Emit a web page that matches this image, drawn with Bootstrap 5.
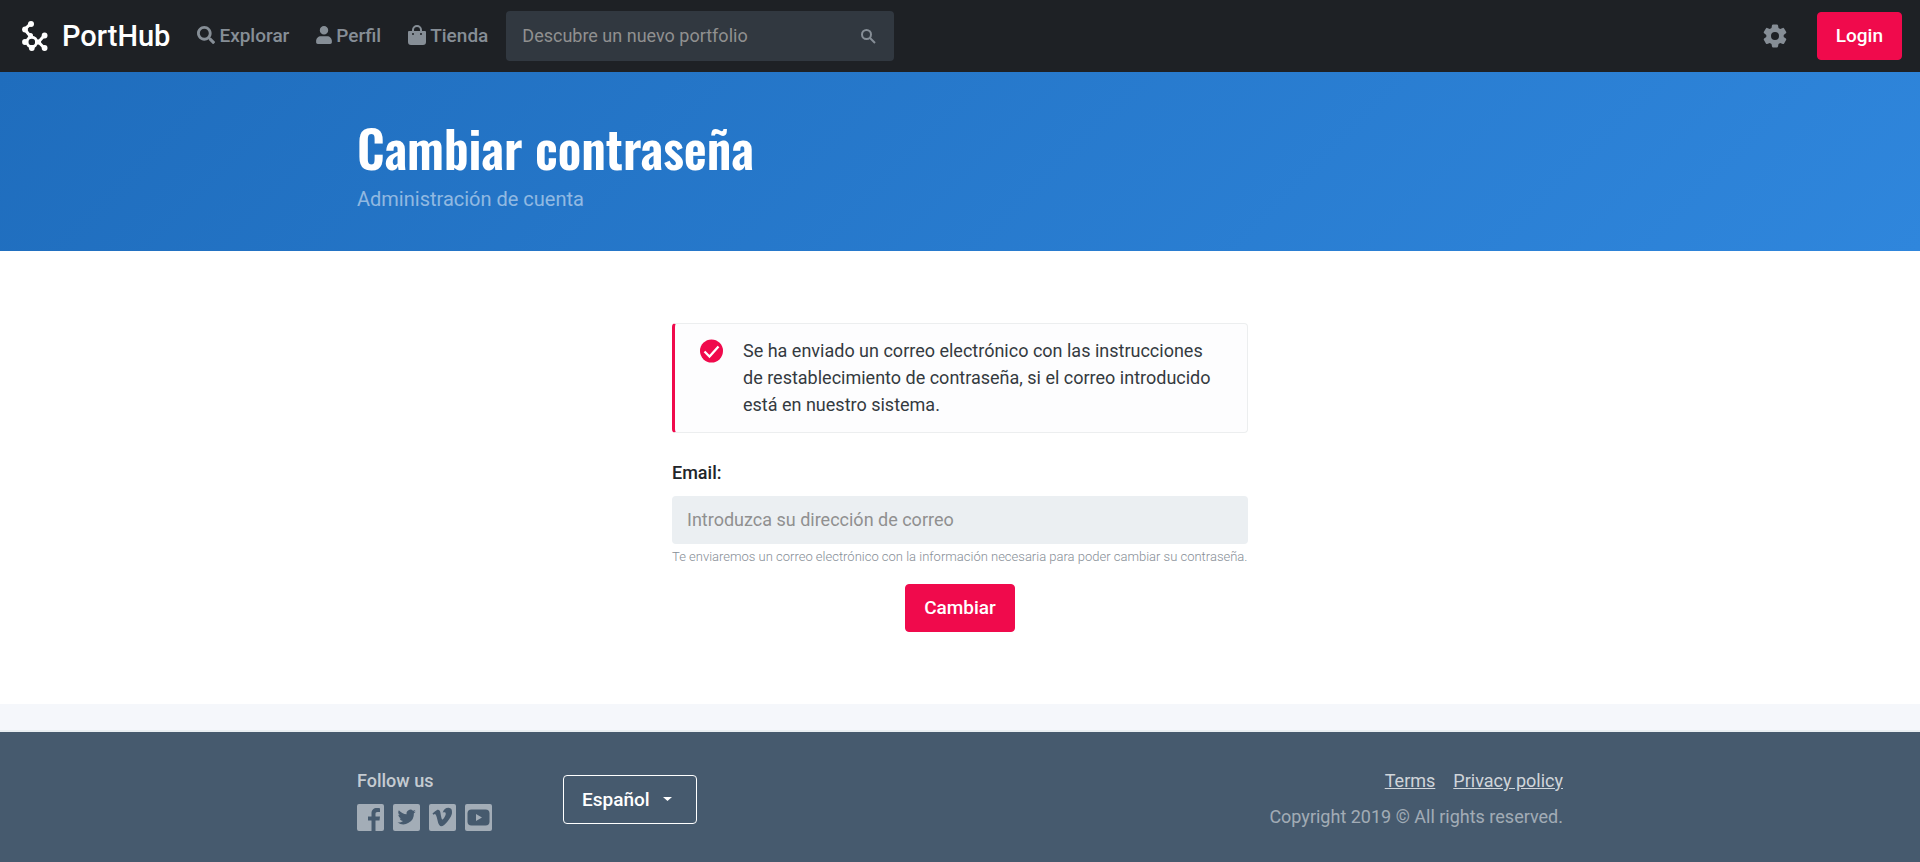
<!DOCTYPE html>
<html lang="es">
<head>
<meta charset="utf-8">
<meta name="viewport" content="width=device-width, initial-scale=1">
<title>PortHub - Cambiar contraseña</title>
<link href="https://cdn.jsdelivr.net/npm/bootstrap@5.3.0/dist/css/bootstrap.min.css" rel="stylesheet">
<style>
body{font-family:Roboto,"Liberation Sans",sans-serif;font-size:18px;line-height:27px;color:#212529;background:#fff}
.topbar{background:#1e2125;min-height:72px;padding:0 18px 0 22px}
.topbar .navbar-brand{font-size:29px;font-weight:500;line-height:36px;color:#fff;gap:14px;padding:0;margin-right:27px}
.topbar .navbar-nav .nav-link{color:#868e96;font-size:19px;font-weight:500;padding:0 0 2px;gap:4px}
.topbar .navbar-nav{gap:27px}
.site-search{width:388px;margin-left:18px;background:#313840;border-radius:4px;height:50px;padding:0 18px 0 16px}
.site-search input{background:transparent;border:0;outline:0;color:#fff;min-width:0;padding:0 0 2px}
.site-search input::placeholder,.field::placeholder{color:#909090;opacity:1}
.icon-btn{background:none;border:0;padding:0;color:#868e96;line-height:0}
.btn-brand{background:#f00a4c;color:#fff;font-size:19px;line-height:26px;font-weight:500;border:1px solid #f00a4c;border-radius:4px;padding:10px 18px}
.btn-brand:hover{background:#d10842;color:#fff}
.page{max-width:1242px;padding:0 18px}
.hero{background:linear-gradient(135deg,#1f6dbd 0%,#2f86dc 100%);padding:45px 0 38px}
.hero h1{font-family:Oswald,"Liberation Sans Narrow","DejaVu Sans Condensed",sans-serif;font-size:50px;line-height:60px;font-weight:600;color:#fff;margin:0 0 9px}
.hero p{font-size:20px;line-height:27px;color:rgba(255,255,255,.5);margin:0}
.form-col{max-width:612px;padding:72px 18px}
.notice{background:#fdfdfe;border:1px solid #eceeef;border-left:3px solid #f00a4c;border-radius:4px;padding:13px 26px 14px 25px;gap:19px;color:#343a40;margin-bottom:26px}
.notice svg{margin-top:2px}
.field-label{font-weight:500;margin-bottom:10px}
.field{background:#ebeff2;border:0;border-radius:4px;height:48px;padding:0 15px 2px}
.hint{font-size:13px;line-height:20px;font-weight:300;color:#868e96;padding-top:3px;margin-bottom:17px}
.divider{height:28px;background:#f5f7fb;border-bottom:2px solid #e9eef2}
.site-footer{background:#465a6e;padding:35px 0 31px;color:rgba(255,255,255,.5)}
.site-footer h2{font-size:18px;line-height:27px;font-weight:500;color:rgba(255,255,255,.7);margin:0 0 10px}
.site-footer .social{gap:9px;color:#a3adb7;line-height:0}
.social a{color:inherit}
.site-footer .legal a{color:rgba(255,255,255,.75)}
.legal{gap:18px;margin-bottom:9px}
.lang{appearance:none;background:transparent url("data:image/svg+xml,%3Csvg xmlns='http://www.w3.org/2000/svg' width='10' height='5'%3E%3Cpath d='M0 0h9L4.500 4z' fill='white'/%3E%3C/svg%3E") no-repeat right 23px center;border:1px solid #fff;border-radius:4px;color:#fff;font-size:19px;font-weight:500;height:49px;width:134px;padding:0 18px;margin-top:8px}
.lang option{color:#212529}
.follow{margin-right:71px}
</style>
</head>
<body class="d-flex flex-column min-vh-100">
<nav class="navbar navbar-expand topbar">
  <a class="navbar-brand d-flex align-items-center" href="#">
    <svg width="26" height="30" viewBox="0 0 26 30" fill="#fff"><g fill="none" stroke="#fff" stroke-width="3"><path d="M8.700 2.700 2.700 8.300 8.500 15.500"/><circle cx="9.800" cy="21" r="4.800"/><path d="M13 21h4M16.500 21l6-6.700M16.500 21l6 6.300"/></g><circle cx="9" cy="3" r="3"/><circle cx="3" cy="8.500" r="2.900"/><circle cx="8.500" cy="14.500" r="2.500"/><circle cx="3" cy="21" r="2.900"/><circle cx="9.800" cy="27" r="2.900"/><circle cx="16.500" cy="21" r="2.600"/><circle cx="22.600" cy="14.500" r="2.900"/><circle cx="22.600" cy="27" r="2.900"/></svg>
    <span>PortHub</span>
  </a>
  <ul class="navbar-nav">
    <li><a class="nav-link d-flex align-items-center" href="#"><svg width="18" height="18" viewBox="0 0 512 512" fill="currentColor"><path d="M505 442.700 405.300 343c-4.500-4.500-10.600-7-17-7H372c27.600-35.300 44-79.700 44-128C416 93.100 322.900 0 208 0S0 93.100 0 208s93.100 208 208 208c48.300 0 92.700-16.400 128-44v16.300c0 6.400 2.500 12.500 7 17l99.700 99.700c9.400 9.400 24.600 9.400 33.900 0l28.300-28.300c9.400-9.400 9.400-24.600.1-34zM208 336c-70.700 0-128-57.200-128-128 0-70.700 57.200-128 128-128 70.700 0 128 57.200 128 128 0 70.700-57.200 128-128 128z"/></svg>Explorar</a></li>
    <li><a class="nav-link d-flex align-items-center" href="#"><svg width="16" height="18" viewBox="0 0 448 512" fill="currentColor"><path d="M224 240c66 0 120-54 120-120S290 0 224 0 104 54 104 120s54 120 120 120zm89.600 48H134.400C60.200 288 0 348.200 0 422.400V464c0 26.500 21.500 48 48 48h352c26.500 0 48-21.500 48-48v-41.600c0-74.200-60.200-134.400-134.400-134.400z"/></svg>Perfil</a></li>
    <li><a class="nav-link d-flex align-items-center" href="#"><svg width="18" height="20" viewBox="0 0 18 20" fill="currentColor"><path fill-rule="evenodd" d="M4 6V5a5 5 0 0 1 10 0v1h3a1 1 0 0 1 1 1v10a3 3 0 0 1-3 3H3a3 3 0 0 1-3-3V7a1 1 0 0 1 1-1zm2 0h6V5a3 3 0 0 0-6 0zM5 8a1 1 0 1 0 0 2 1 1 0 0 0 0-2m8 0a1 1 0 1 0 0 2 1 1 0 0 0 0-2"/></svg>Tienda</a></li>
  </ul>
  <form class="site-search d-flex align-items-center">
    <input class="flex-grow-1" type="text" placeholder="Descubre un nuevo portfolio" aria-label="Descubre un nuevo portfolio">
    <button class="icon-btn" type="button" aria-label="Buscar"><svg width="15" height="15" viewBox="0 0 15 15" fill="none" stroke="currentColor" stroke-width="2"><circle cx="5.500" cy="5.500" r="4.500"/><path d="m9 9 5 5"/></svg></button>
  </form>
  <div class="ms-auto d-flex align-items-center">
    <button class="icon-btn me-4" type="button" aria-label="Ajustes"><svg width="36" height="28" viewBox="-6 -2 36 28" fill="currentColor"><path d="M13.900 23.500c.5 0 1-.4 1.100-.9l.5-2.700c.6-.3 1.200-.6 1.700-1l2.600 1c.5.200 1 0 1.300-.5l2-3.400c.3-.5.200-1-.2-1.400l-2.200-1.700v-2l2.200-1.700c.4-.3.500-.9.200-1.400l-2-3.400c-.3-.5-.8-.7-1.300-.5l-2.600 1c-.5-.4-1.100-.7-1.700-1L15 1.300c-.1-.5-.5-.9-1.100-.9h-3.800C9.500.4 9.100.8 9 1.300l-.5 2.600c-.6.300-1.200.6-1.700 1l-2.600-1c-.5-.2-1 0-1.300.5l-2 3.400c-.3.500-.2 1.100.2 1.400l2.200 1.700v2L1.100 14.600c-.4.400-.5.900-.2 1.400l2 3.400c.3.500.8.700 1.300.5l2.600-1c.5.400 1.100.7 1.700 1l.5 2.700c.1.500.5.900 1.100.9zM12 16a4 4 0 1 1 0-8 4 4 0 0 1 0 8z"/></svg></button>
    <button class="btn btn-brand" type="button">Login</button>
  </div>
</nav>
<header class="hero">
  <div class="container-fluid page">
    <h1>Cambiar contraseña</h1>
    <p>Administración de cuenta</p>
  </div>
</header>
<main class="flex-grow-1">
  <div class="container-fluid form-col">
    <div class="notice d-flex align-items-start" role="status">
      <svg class="flex-shrink-0" width="24" height="24" viewBox="0 0 24 24"><circle cx="11.500" cy="12" r="11.500" fill="#f00a4c"/><path d="m4.500 12.500 5 5 9-10" fill="none" stroke="#fff" stroke-width="2.300"/></svg>
      <div>Se ha enviado un correo electrónico con las instrucciones de restablecimiento de contraseña, si el correo introducido está en nuestro sistema.</div>
    </div>
    <form>
      <label class="field-label d-block" for="email">Email:</label>
      <input class="field w-100 d-block" id="email" type="email" placeholder="Introduzca su dirección de correo" aria-describedby="email-hint">
      <div class="hint" id="email-hint">Te enviaremos un correo electrónico con la información necesaria para poder cambiar su contraseña.</div>
      <div class="text-center"><button class="btn btn-brand" type="button">Cambiar</button></div>
    </form>
  </div>
</main>
<div class="divider"></div>
<footer class="site-footer">
  <div class="container-fluid page d-flex flex-wrap align-items-start">
    <div class="follow">
      <h2>Follow us</h2>
      <div class="social d-flex">
        <a href="#" aria-label="Facebook"><svg width="27" height="27" viewBox="0 0 27 27" fill="currentColor"><path d="M2 0h23a2 2 0 0 1 2 2v23a2 2 0 0 1-2 2h-6.500V16.500h4l.5-4h-4.500V10c0-1.300.4-2 2-2H23V4.200c-.5-.1-1.700-.2-3.200-.2-3.200 0-5.300 1.900-5.300 5.400v3.100H11v4h3.500V27H2a2 2 0 0 1-2-2V2a2 2 0 0 1 2-2z"/></svg></a>
        <a href="#" aria-label="Twitter"><svg width="27" height="27" viewBox="0 0 27 27"><rect width="27" height="27" rx="2" fill="currentColor"/><path transform="translate(4 3.500) scale(.8)" fill="#465a6e" d="M23.600 4.900c-.8.400-1.700.6-2.700.8 1-.6 1.700-1.500 2-2.600-.9.500-1.900.9-2.900 1.100a4.700 4.700 0 0 0-8 4.200C8.200 8.200 4.700 6.300 2.300 3.400a4.700 4.700 0 0 0 1.500 6.200c-.8 0-1.500-.2-2.100-.6v.1c0 2.200 1.600 4.100 3.700 4.500-.7.200-1.400.2-2.100.1.600 1.800 2.300 3.200 4.300 3.200A9.400 9.400 0 0 1 .7 18.800a13.200 13.200 0 0 0 20.400-11.700c.9-.6 1.800-1.300 2.500-2.200z"/></svg></a>
        <a href="#" aria-label="Vimeo"><svg width="27" height="27" viewBox="0 0 27 27"><rect width="27" height="27" rx="2" fill="currentColor"/><path fill="#465a6e" d="M23 9c-.1 2-1.500 4.600-4.100 8-2.700 3.500-5 5.200-6.800 5.200-1.200 0-2.100-1-2.900-3.100L7.700 13c-.6-2.100-1.200-3.100-1.900-3.100-.1 0-.6.300-1.400.8L3.500 9.600l2.600-2.300C7.300 6.300 8.200 5.700 8.800 5.700c1.400-.1 2.200.8 2.600 2.800.8 4.900 1.300 7 1.900 7 .4 0 1.100-.7 2-2.100.9-1.400 1.400-2.500 1.400-3.200.2-1.300-.3-1.900-1.400-1.900-.5 0-1 .1-1.600.3 1-3.400 3-5 5.900-4.900C22.200 3.800 23.200 5.500 23 9z"/></svg></a>
        <a href="#" aria-label="YouTube"><svg width="27" height="27" viewBox="0 0 27 27"><rect width="27" height="27" rx="2" fill="currentColor"/><rect x="2.500" y="5.500" width="22" height="16" rx="4" fill="#465a6e"/><path fill="currentColor" d="m11 10 6 3.500-6 3.500z"/></svg></a>
      </div>
    </div>
    <select class="lang" aria-label="Idioma"><option>Español</option><option>English</option></select>
    <div class="ms-auto text-end">
      <div class="legal d-flex justify-content-end"><a href="#">Terms</a><a href="#">Privacy policy</a></div>
      <div>Copyright 2019 © All rights reserved.</div>
    </div>
  </div>
</footer>
<script src="https://cdn.jsdelivr.net/npm/bootstrap@5.3.0/dist/js/bootstrap.bundle.min.js"></script>
</body>
</html>
